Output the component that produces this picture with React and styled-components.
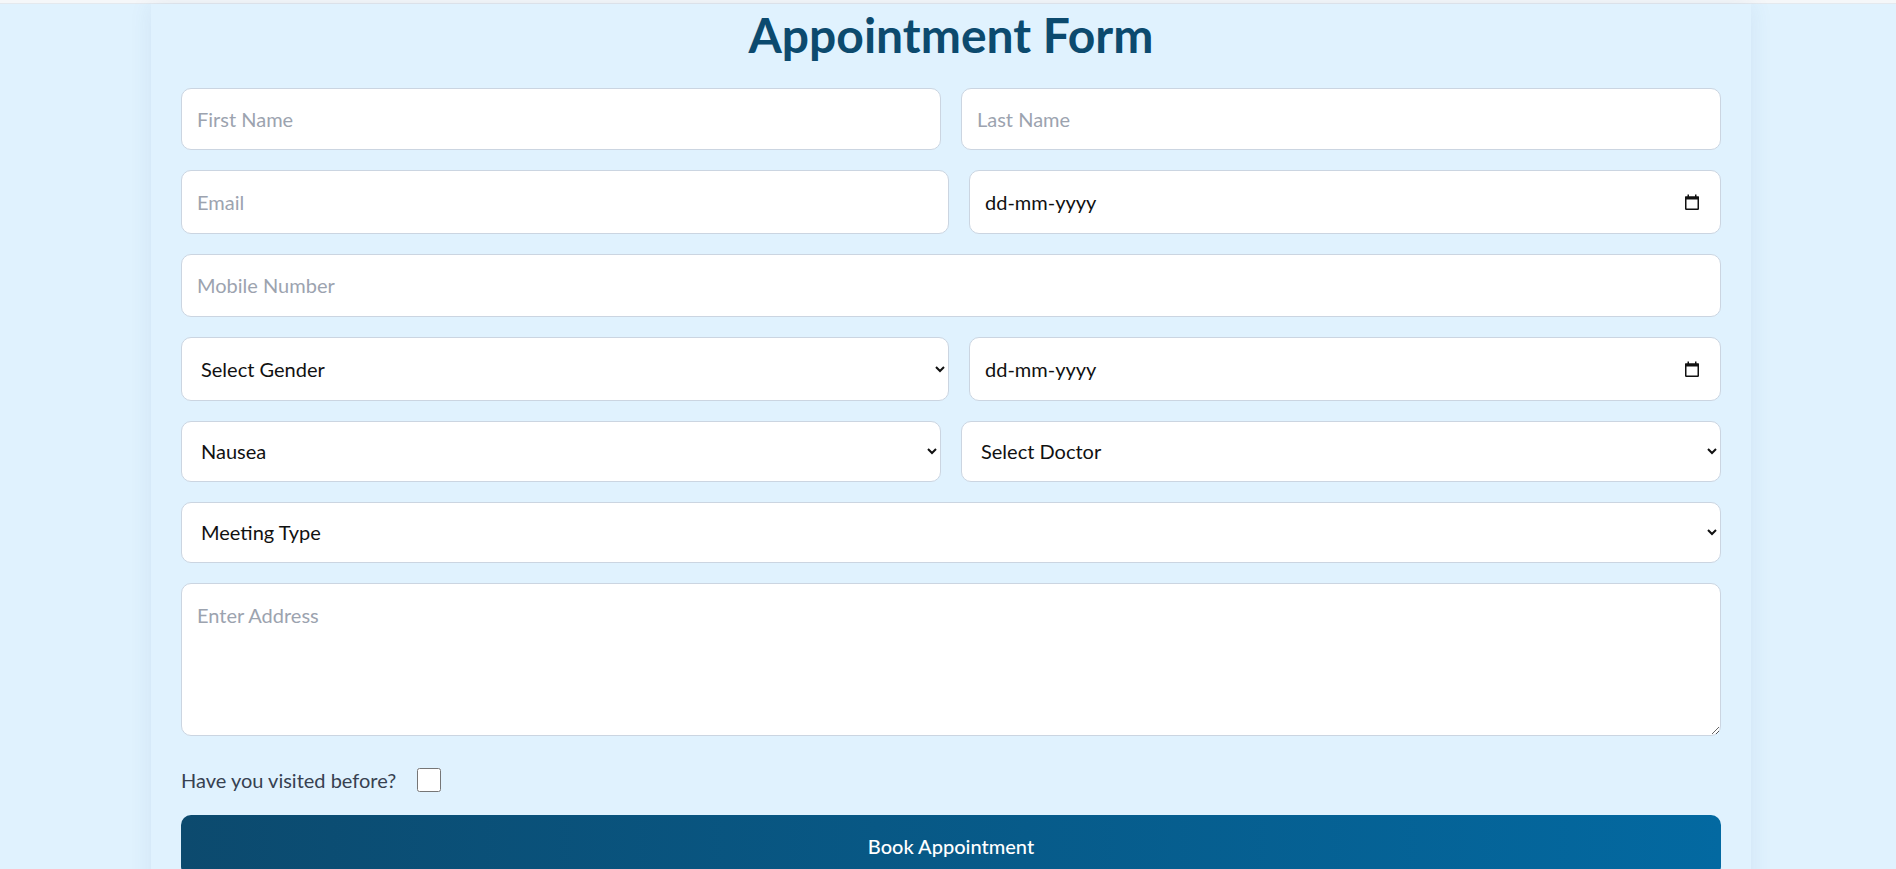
import React from 'react';
import styled, { createGlobalStyle } from 'styled-components';

const GlobalStyle = createGlobalStyle`
  body {
    margin: 0;
    background: #e0f2fe;
    font-family: Lato, "Noto Sans", sans-serif;
  }
  * {
    box-sizing: border-box;
  }
`;

const TopStrip = styled.div`
  height: 4px;
  background: #f5f7f9;
  border-bottom: 1px solid #e4e9ee;
`;

const Card = styled.div`
  width: 1600px;
  margin-left: calc(50% - 797px);
  padding: 2px 30px 40px;
  background: #e0f2fe;
  box-shadow: 0 0 22px rgba(40, 90, 140, 0.09);
`;

const Title = styled.h1`
  margin: 0 0 24px;
  text-align: center;
  font-size: 48px;
  line-height: 1.2;
  font-weight: 700;
  color: #0c4a6e;
`;

const Form = styled.form`
  display: flex;
  flex-direction: column;
  gap: 20px;
`;

const Row = styled.div`
  display: grid;
  grid-template-columns: ${(p) => p.$cols || '1fr 1fr'};
  gap: 20px;
`;

const fieldBase = `
  width: 100%;
  background: #fff;
  border: 1px solid #cbd5e1;
  border-radius: 10px;
  padding: 0 15px;
  font-family: Lato, "Noto Sans", sans-serif;
  font-size: 20px;
  color: #111;
  outline: none;
  &::placeholder {
    color: #9ca3af;
  }
`;

const Input = styled.input`
  ${fieldBase}
  height: ${(p) => p.$h || 62}px;
`;

const Select = styled.select`
  ${fieldBase}
  height: ${(p) => p.$h || 62}px;
`;

const DateWrap = styled.div`
  position: relative;
`;

const DateInput = styled.input`
  ${fieldBase}
  height: 64px;
  &::placeholder {
    color: #111;
  }
`;

const CalendarIcon = styled.svg`
  position: absolute;
  right: 21px;
  top: 50%;
  transform: translateY(-50%);
  pointer-events: none;
`;

const TextArea = styled.textarea`
  ${fieldBase}
  height: 153px;
  padding: 19px 15px;
  resize: vertical;
`;

const CheckRow = styled.label`
  display: flex;
  align-items: center;
  gap: 21px;
  margin: 12px 0 3px;
  font-size: 20px;
  color: #374151;
`;

const Check = styled.input`
  width: 24px;
  height: 24px;
  margin: 0;
`;

const Button = styled.button`
  height: 62px;
  border: none;
  border-radius: 10px;
  background: linear-gradient(to right, #0c4a6e, #0369a1);
  color: #fff;
  font-family: Lato, "Noto Sans", sans-serif;
  font-size: 20px;
  font-weight: 500;
  cursor: pointer;
`;

function DateField() {
  return (
    <DateWrap>
      <DateInput placeholder="dd-mm-yyyy" />
      <CalendarIcon width="16" height="17" viewBox="0 0 16 17">
        <rect x="1.75" y="3.75" width="12.5" height="12" fill="none" stroke="#111" strokeWidth="1.5" rx="0.5" />
        <rect x="1" y="3" width="14" height="3" fill="#111" />
        <rect x="3.5" y="1" width="1.5" height="3" fill="#111" />
        <rect x="11" y="1" width="1.5" height="3" fill="#111" />
      </CalendarIcon>
    </DateWrap>
  );
}

export default function App() {
  return (
    <>
      <GlobalStyle />
      <TopStrip />
      <Card>
        <Title>Appointment Form</Title>
        <Form onSubmit={(e) => e.preventDefault()}>
          <Row>
            <Input placeholder="First Name" />
            <Input placeholder="Last Name" />
          </Row>
          <Row $cols="768px 1fr">
            <Input type="email" placeholder="Email" $h={64} />
            <DateField />
          </Row>
          <Row $cols="1fr">
            <Input placeholder="Mobile Number" $h={63} />
          </Row>
          <Row $cols="768px 1fr">
            <Select $h={64} defaultValue="">
              <option value="">Select Gender</option>
              <option>Male</option>
              <option>Female</option>
            </Select>
            <DateField />
          </Row>
          <Row>
            <Select $h={61} defaultValue="Nausea">
              <option>Nausea</option>
              <option>Fever</option>
              <option>Headache</option>
            </Select>
            <Select $h={61} defaultValue="">
              <option value="">Select Doctor</option>
            </Select>
          </Row>
          <Row $cols="1fr">
            <Select $h={61} defaultValue="">
              <option value="">Meeting Type</option>
              <option>Online</option>
              <option>In Person</option>
            </Select>
          </Row>
          <TextArea placeholder="Enter Address" />
          <CheckRow>
            Have you visited before?
            <Check type="checkbox" />
          </CheckRow>
          <Button type="submit">Book Appointment</Button>
        </Form>
      </Card>
    </>
  );
}
